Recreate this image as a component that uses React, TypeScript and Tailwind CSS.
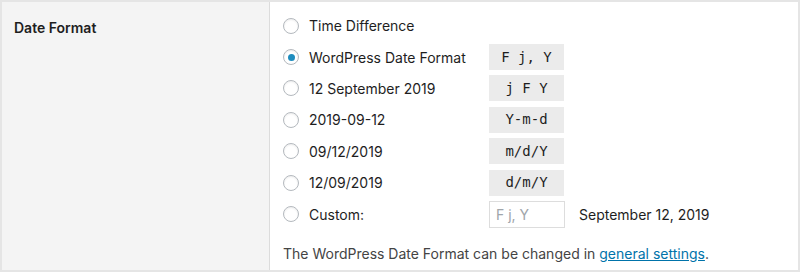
import React from "react";

const rows: { label: string; code?: string; checked?: boolean }[] = [
  { label: "Time Difference" },
  { label: "WordPress Date Format", code: "F j, Y", checked: true },
  { label: "12 September 2019", code: "j F Y" },
  { label: "2019-09-12", code: "Y-m-d" },
  { label: "09/12/2019", code: "m/d/Y" },
  { label: "12/09/2019", code: "d/m/Y" },
];

function Radio({ checked }: { checked?: boolean }) {
  return (
    <span className="flex h-4 w-4 shrink-0 items-center justify-center rounded-full border border-[#b4b9be] bg-white shadow-[inset_0_1px_2px_rgba(0,0,0,0.08)]">
      {checked && <span className="h-[7px] w-[7px] rounded-full bg-[#1e8cbe]" />}
    </span>
  );
}

export default function App() {
  return (
    <div
      className="h-[273px] w-[800px] bg-white"
      style={{ fontFamily: "Inter, 'Noto Sans', sans-serif" }}
    >
      <div className="flex h-[272px] w-full border-[2px] border-[#e5e5e5] border-b-[2px]">
        <div className="w-[268px] shrink-0 border-r border-[#dcdcdc] bg-[#f4f4f4] pl-[12px] pt-[16px]">
          <div className="text-[14px] font-semibold leading-[20px] text-[#1e1e1e]">Date Format</div>
        </div>
        <div className="flex-1 pl-[13px] pt-[8px] text-[14px] text-[#1e1e1e]">
          {rows.map((r) => (
            <div key={r.label} className="flex h-[31.4px] items-center">
              <Radio checked={r.checked} />
              <span className="ml-[10px] w-[180px]">{r.label}</span>
              {r.code && (
                <span
                  className="flex h-[26px] w-[75px] items-center justify-center bg-[#ebebeb] text-[14px] text-[#1e1e1e]"
                  style={{ fontFamily: "'DejaVu Sans Mono', monospace" }}
                >
                  {r.code}
                </span>
              )}
            </div>
          ))}
          <div className="flex h-[31.4px] items-center">
            <Radio />
            <span className="ml-[10px] w-[180px]">Custom:</span>
            <span className="flex h-[27px] w-[76px] items-center border border-[#dddddd] bg-white px-[6px] text-[14px] text-[#a0a5aa]">
              F j, Y
            </span>
            <span className="ml-[14px]">September 12, 2019</span>
          </div>
          <div className="mt-[14px] text-[14px] leading-[20px] text-[#444444]">
            The WordPress Date Format can be changed in{" "}
            <a className="text-[#0073aa] underline">general settings</a>.
          </div>
        </div>
      </div>
    </div>
  );
}
